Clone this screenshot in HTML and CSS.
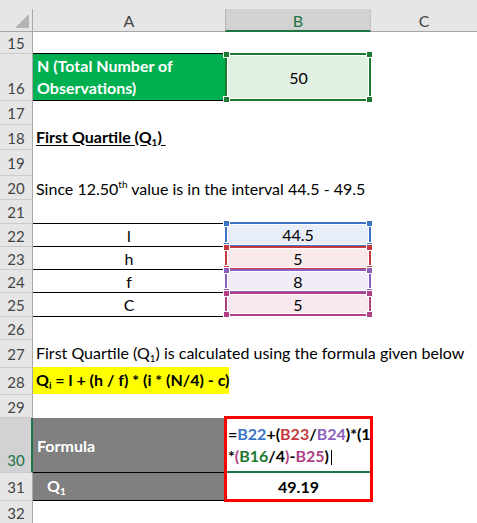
FILE: index.html
```html
<!DOCTYPE html>
<html>
<head>
<meta charset="utf-8">
<link rel="stylesheet" href="styles.css">
</head>
<body>
<div class="sheet">
  <div class="colhead">
    <div class="ch corner"><span class="tri"></span></div>
    <div class="ch">A</div>
    <div class="ch sel">B</div>
    <div class="ch">C</div>
  </div>

  <div class="row h22"><div class="rh">15</div><div class="a bk"></div><div class="b"></div><div class="c"></div></div>
  <div class="row h47">
    <div class="rh bottom">16</div>
    <div class="a green bk br"><span>N (Total Number of<br>Observations)</span></div>
    <div class="b center">
      <div class="selbox"><span class="hd tl"></span><span class="hd tr"></span><span class="hd bl"></span><span class="hd br2"></span></div>
      <span class="val">50</span>
    </div>
    <div class="c"></div>
  </div>
  <div class="row h24"><div class="rh">17</div><div class="a"></div><div class="b"></div><div class="c"></div></div>
  <div class="row h25"><div class="rh">18</div><div class="a over"><span class="title">First Quartile (Q<span class="sub">1</span>)&nbsp;</span></div><div class="b"></div><div class="c"></div></div>
  <div class="row h26"><div class="rh">19</div><div class="a"></div><div class="b"></div><div class="c"></div></div>
  <div class="row h24"><div class="rh">20</div><div class="a over"><span>Since 12.50<span class="sup">th</span> value is in the interval 44.5 - 49.5</span></div><div class="b"></div><div class="c"></div></div>
  <div class="row h24"><div class="rh">21</div><div class="a bk"></div><div class="b"></div><div class="c"></div></div>

  <div class="row h23"><div class="rh">22</div><div class="a bk center">l</div>
    <div class="b"><div class="rng blue first"><span class="hd tl"></span><span class="hd tr"></span><span class="hd bl"></span><span class="hd br2"></span>44.5</div></div><div class="c"></div></div>
  <div class="row h23"><div class="rh">23</div><div class="a bk center">h</div>
    <div class="b"><div class="rng red"><span class="hd tl"></span><span class="hd tr"></span><span class="hd bl"></span><span class="hd br2"></span>5</div></div><div class="c"></div></div>
  <div class="row h23"><div class="rh">24</div><div class="a bk center">f</div>
    <div class="b"><div class="rng purple"><span class="hd tl"></span><span class="hd tr"></span><span class="hd bl"></span><span class="hd br2"></span>8</div></div><div class="c"></div></div>
  <div class="row h24"><div class="rh">25</div><div class="a bk center">C</div>
    <div class="b"><div class="rng magenta last"><span class="hd tl"></span><span class="hd tr"></span><span class="hd bl"></span><span class="hd br2"></span>5</div></div><div class="c"></div></div>

  <div class="row h23"><div class="rh">26</div><div class="a"></div><div class="b"></div><div class="c"></div></div>
  <div class="row h28"><div class="rh">27</div><div class="a over"><span>First Quartile (Q<span class="sub">1</span>) is calculated using the formula given below</span></div><div class="b"></div><div class="c"></div></div>
  <div class="row h27"><div class="rh">28</div><div class="a over"><div class="hl"><span>Q<span class="sub">i</span> = l + (h / f) * (i * (N/4) - c)</span></div></div><div class="b"></div><div class="c"></div></div>
  <div class="row h23"><div class="rh">29</div><div class="a"></div><div class="b"></div><div class="c"></div></div>

  <div class="row h55">
    <div class="rh bottom selrow">30</div>
    <div class="a gray bk">Formula</div>
    <div class="b formula">
      <div class="redbox"></div>
      <div class="ftext">=<span class="fb">B22</span>+(<span class="fr">B23</span>/<span class="fp">B24</span>)*(1<br>*<span class="fm">(</span><span class="fg">B16</span>/4<span class="fm">)</span>-<span class="fm">B25</span>)<span class="caret"></span></div>
    </div>
    <div class="c"></div>
  </div>
  <div class="row h28"><div class="rh">31</div><div class="a gray bk q1"><span>Q<span class="sub">1</span></span></div><div class="b center strong">49.19</div><div class="c"></div></div>
  <div class="row h23"><div class="rh">32</div><div class="a"></div><div class="b"></div><div class="c"></div></div>
</div>
</body>
</html>
```

FILE: styles.css
```css
* { box-sizing: border-box; }
html, body { margin: 0; padding: 0; }
body {
  width: 477px;
  height: 523px;
  overflow: hidden;
  background: #fff;
  font-family: Lato, "Liberation Sans", sans-serif;
  font-size: 16px;
  color: #000;
}
.sheet { display: flex; flex-direction: column; }

.colhead {
  display: grid;
  grid-template-columns: 33px 193px 145px 1fr;
  height: 32px;
  padding-top: 9px;
  background: #e6e6e6;
}
.ch {
  display: flex;
  align-items: center;
  justify-content: center;
  border-right: 1px solid #c3c3c3;
  border-bottom: 1px solid #a8a8a8;
  color: #444;
  font-size: 16px;
  padding-top: 1px;
}
.ch:last-child { border-right: none; }
.ch.sel {
  background: #d2d2d2;
  color: #217346;
  border-bottom: 2px solid #217346;
  border-left: 1px solid #b5b5b5;
  margin-left: -1px;
}
.corner { position: relative; border-right-color: #a8a8a8; }
.tri {
  position: absolute;
  left: 15px;
  top: 5px;
  width: 0;
  height: 0;
  border-left: 14px solid transparent;
  border-bottom: 14px solid #b4b4b4;
}

.row { display: grid; grid-template-columns: 33px 193px 145px 1fr; }
.h22 { height: 22px; }
.h23 { height: 23px; }
.h24 { height: 24px; }
.h25 { height: 25px; }
.h26 { height: 26px; }
.h27 { height: 27px; }
.h28 { height: 28px; }
.h47 { height: 47px; }
.h55 { height: 55px; }

.rh {
  background: #e6e6e6;
  border-right: 1px solid #a8a8a8;
  border-bottom: 1px solid #cacaca;
  display: flex;
  align-items: center;
  justify-content: center;
  color: #444;
  font-size: 15px;
  padding-top: 1px;
}
.rh.bottom { align-items: flex-end; padding-bottom: 3px; }
.rh.selrow {
  background: #d2d2d2;
  color: #217346;
  border-right: 2px solid #217346;
  padding-left: 1px;
}

.a, .b, .c {
  border-bottom: 1px solid transparent;
  display: flex;
  align-items: center;
  white-space: nowrap;
  position: relative;
}
.a { padding-left: 3px; border-right: 1px solid transparent; }
.bk { border-bottom-color: #000; }
.br { border-right-color: #000; }
.center { justify-content: center; padding-left: 0; }
.over { overflow: visible; z-index: 2; }

.green {
  background: #00b050;
  color: #fff;
  font-weight: bold;
  align-items: flex-end;
  line-height: 22px;
  padding-bottom: 1px;
  padding-left: 4px;
}
.gray {
  background: #808080;
  color: #fff;
  font-weight: bold;
  padding-left: 4px;
}
.q1 { padding-left: 14px; }

.title { font-weight: bold; text-decoration: underline; text-underline-offset: 2px; }
.sub { font-size: 10px; vertical-align: -3px; }
.sup { font-size: 10px; vertical-align: 7px; }
.hl {
  display: flex;
  align-items: center;
  background: #ffff00;
  font-weight: bold;
  height: 27px;
  width: 205px;
  margin-left: -3px;
  padding-left: 3px;
  margin-top: -1px;
}

.val { position: relative; z-index: 1; }
.selbox {
  position: absolute;
  left: -1px;
  top: -1px;
  right: 0;
  bottom: -1px;
  border: 2px solid #1b7a30;
  background: #e2f0e4;
  box-shadow: inset 0 0 0 1px #fff;
}
.hd {
  position: absolute;
  width: 7px;
  height: 7px;
  border: 1px solid #fff;
  background: var(--c, #1b7a30);
}
.tl { left: -4px; top: -4px; }
.tr { right: -4px; top: -4px; }
.bl { left: -4px; bottom: -4px; }
.br2 { right: -4px; bottom: -4px; }

.rng {
  position: absolute;
  left: -1px;
  top: -1px;
  right: 0;
  bottom: -1px;
  border: 2px solid var(--c);
  background: var(--f);
  box-shadow: inset 0 0 0 1px #fff;
  display: flex;
  align-items: center;
  justify-content: center;
}
.rng.first { top: -2px; }
.rng.last { bottom: 0; }
.blue { --c: #3d74c8; --f: #e8eef8; }
.red { --c: #c5393f; --f: #f9e9e9; }
.purple { --c: #8c5fbe; --f: #f1ecf8; }
.magenta { --c: #b03f84; --f: #f7e8ef; }

.formula {
  border-bottom: 2px solid #217346;
  align-items: center;
  padding-left: 2px;
}
.redbox {
  position: absolute;
  left: -2px;
  top: -2px;
  width: 149px;
  height: 86px;
  border: 3px solid #ff0000;
  z-index: 3;
}
.ftext {
  font-weight: bold;
  line-height: 22px;
  white-space: nowrap;
  margin-top: 1px;
}
.fb { color: #3d74c8; }
.fr { color: #c5393f; }
.fp { color: #8c5fbe; }
.fg { color: #1b7a30; }
.fm { color: #b03f84; }
.caret {
  display: inline-block;
  width: 1px;
  height: 15px;
  background: #000;
  vertical-align: -3px;
  margin-left: 2px;
}
.strong { font-weight: bold; }
```
